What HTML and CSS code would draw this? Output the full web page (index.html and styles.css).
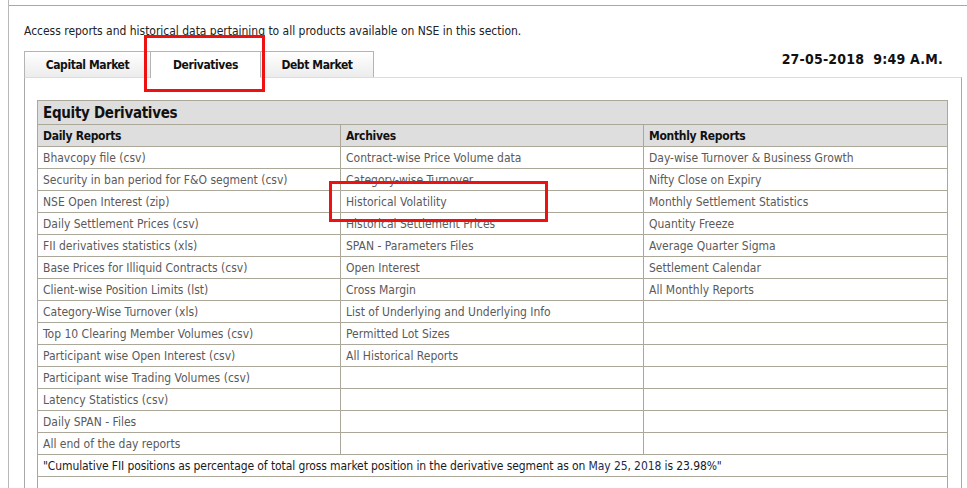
FILE: index.html
```html
<!DOCTYPE html>
<html>
<head>
<meta charset="utf-8">
<link rel="stylesheet" href="styles.css">
</head>
<body>
<div class="page">
  <div class="topbar"></div>
  <div class="content">
    <p class="intro">Access reports and historical data pertaining to all products available on NSE in this section.</p>
    <div class="tabrow">
      <div class="tabs">
        <div class="tab">Capital Market</div>
        <div class="tab active">Derivatives</div>
        <div class="tab">Debt Market</div>
      </div>
      <div class="date">27-05-2018&nbsp; 9:49 A.M.</div>
    </div>
    <div class="panel">
      <table class="reports">
        <colgroup><col class="c1"><col class="c2"><col class="c3"></colgroup>
        <tr><th class="title" colspan="3">Equity Derivatives</th></tr>
        <tr class="colhead"><th>Daily Reports</th><th>Archives</th><th>Monthly Reports</th></tr>
        <tr><td>Bhavcopy file (csv)</td><td>Contract-wise Price Volume data</td><td>Day-wise Turnover &amp; Business Growth</td></tr>
        <tr><td>Security in ban period for F&amp;O segment (csv)</td><td>Category-wise Turnover</td><td>Nifty Close on Expiry</td></tr>
        <tr><td>NSE Open Interest (zip)</td><td>Historical Volatility</td><td>Monthly Settlement Statistics</td></tr>
        <tr><td>Daily Settlement Prices (csv)</td><td>Historical Settlement Prices</td><td>Quantity Freeze</td></tr>
        <tr><td>FII derivatives statistics (xls)</td><td>SPAN - Parameters Files</td><td>Average Quarter Sigma</td></tr>
        <tr><td>Base Prices for Illiquid Contracts (csv)</td><td>Open Interest</td><td>Settlement Calendar</td></tr>
        <tr><td>Client-wise Position Limits (lst)</td><td>Cross Margin</td><td>All Monthly Reports</td></tr>
        <tr><td>Category-Wise Turnover (xls)</td><td>List of Underlying and Underlying Info</td><td></td></tr>
        <tr><td>Top 10 Clearing Member Volumes (csv)</td><td>Permitted Lot Sizes</td><td></td></tr>
        <tr><td>Participant wise Open Interest (csv)</td><td>All Historical Reports</td><td></td></tr>
        <tr><td>Participant wise Trading Volumes (csv)</td><td></td><td></td></tr>
        <tr><td>Latency Statistics (csv)</td><td></td><td></td></tr>
        <tr><td>Daily SPAN - Files</td><td></td><td></td></tr>
        <tr><td>All end of the day reports</td><td></td><td></td></tr>
        <tr><td class="note" colspan="3">"Cumulative FII positions as percentage of total gross market position in the derivative segment as on <span class="dt">May 25, 2018</span> is 23.98%"</td></tr>
        <tr><td class="empty" colspan="3"></td></tr>
      </table>
    </div>
  </div>
  <div class="mark mark-tab"></div>
  <div class="mark mark-row"></div>
</div>
</body>
</html>
```

FILE: styles.css
```css
html, body {
  margin: 0;
  padding: 0;
  background: #fff;
}
body {
  font-family: "DejaVu Sans", Verdana, sans-serif;
  font-stretch: condensed;
  font-size: 12px;
  color: #222;
  overflow: hidden;
  height: 488px;
}
.page {
  position: relative;
  margin-left: 8px;
  border-left: 1px solid #b8b8b8;
  height: 600px;
}
.topbar {
  height: 5px;
  border-bottom: 1px solid #a8a8a8;
}
.content {
  padding-left: 15px;
}
.intro {
  margin: 0;
  padding-top: 18px;
  height: 27px;
  line-height: 15px;
  color: #222;
  letter-spacing: -0.02px;
}
.tabrow {
  display: flex;
  justify-content: space-between;
  align-items: flex-start;
  width: 926px;
  height: 26px;
}
.tabs {
  display: flex;
  height: 26px;
}
.tab {
  box-sizing: border-box;
  height: 26px;
  border: 1px solid #b4b4b4;
  border-bottom: none;
  border-right: none;
  background: linear-gradient(#ffffff, #ececec);
  font-weight: bold;
  color: #111;
  line-height: 26px;
  text-align: center;
  letter-spacing: -0.4px;
}
.tab:nth-child(1) { width: 126px; }
.tab:nth-child(2) { width: 110px; }
.tab:nth-child(3) { width: 114px; border-right: 1px solid #b4b4b4; }
.tab.active {
  background: #fff;
  height: 27px;
  position: relative;
  z-index: 1;
}
.date {
  font-size: 14px;
  font-weight: bold;
  color: #111;
  padding-right: 7px;
  line-height: 16px;
  letter-spacing: 0.2px;
}
.panel {
  width: 924px;
  border: 1px solid #a8a8a8;
  border-top: 1px solid #dcdcdc;
  padding: 22px 0 0 12px;
  box-sizing: content-box;
  height: 420px;
}
.reports {
  border-collapse: collapse;
  width: 910px;
  table-layout: fixed;
}
.reports col.c1 { width: 303px; }
.reports col.c2 { width: 303px; }
.reports col.c3 { width: 304px; }
.reports th, .reports td {
  border: 1px solid #aca899;
  padding: 0 0 0 5px;
  height: 21px;
  text-align: left;
  white-space: nowrap;
  overflow: hidden;
}
.reports td {
  color: #5a5a5a;
}
.reports th {
  background: #dedede;
  font-weight: bold;
  color: #111;
  letter-spacing: -0.3px;
}
.reports th.title {
  font-size: 15px;
  height: 23px;
}
.reports td.note {
  color: #1a1a1a;
  letter-spacing: -0.1px;
}
.reports .dt {
  color: #232a52;
}
.reports td.empty {
  height: 30px;
}
.mark {
  position: absolute;
  border: 3px solid #ee1111;
}
.mark-tab {
  left: 135px;
  top: 35px;
  width: 115px;
  height: 51px;
}
.mark-row {
  left: 320px;
  top: 181px;
  width: 213px;
  height: 35px;
}
```
